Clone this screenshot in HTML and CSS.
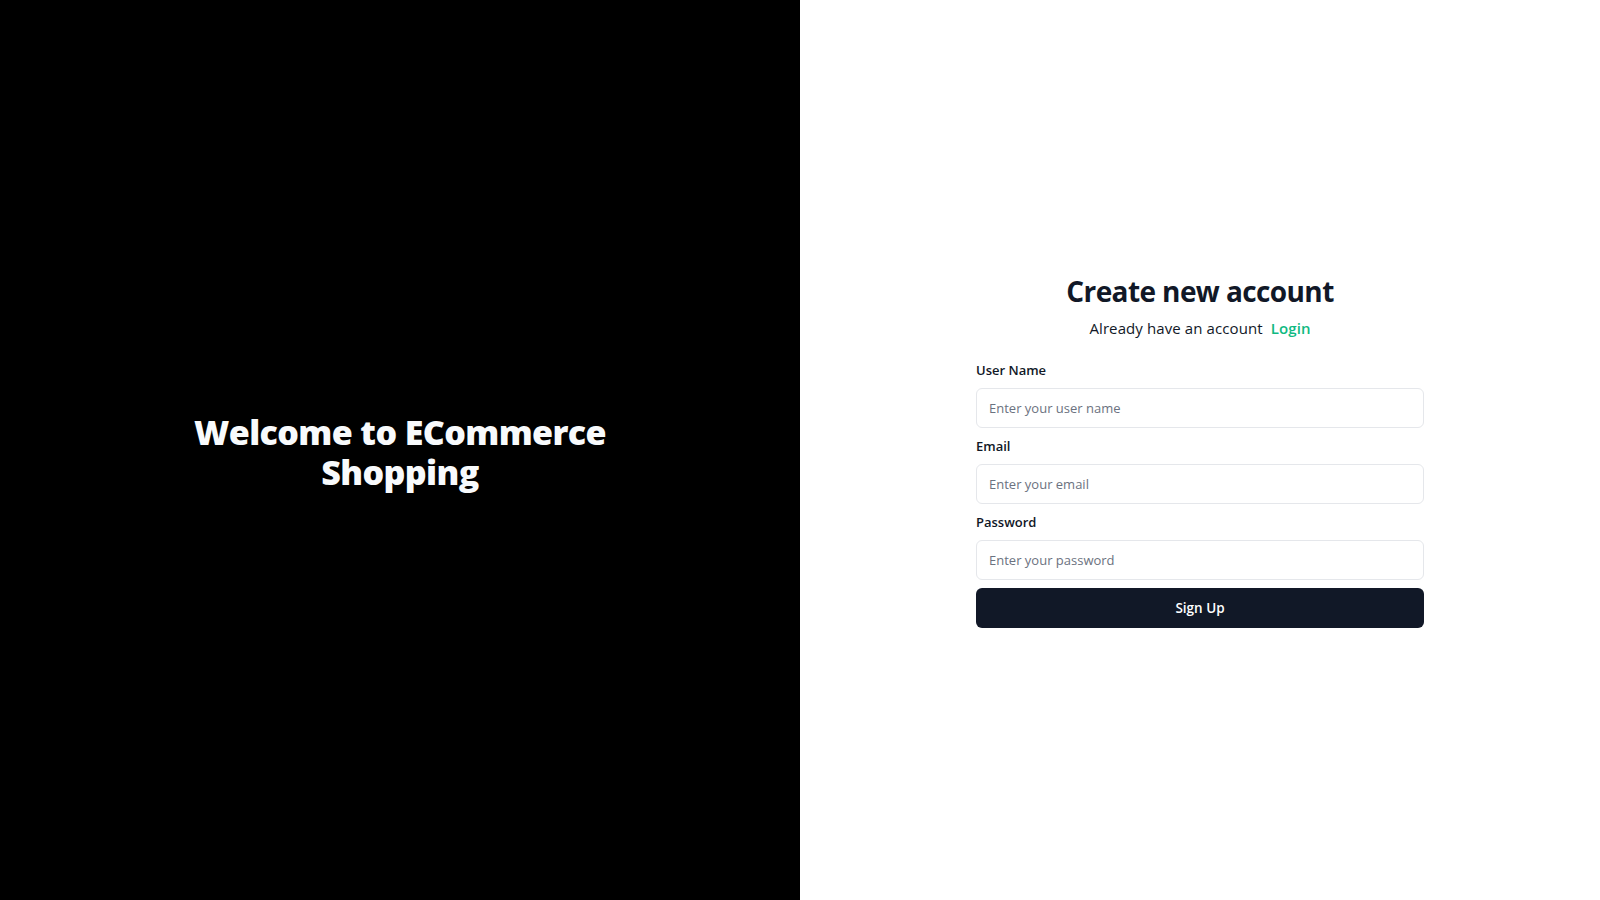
FILE: index.html
```html
<!DOCTYPE html>
<html lang="en">
<head>
<meta charset="utf-8">
<title>Create new account</title>
<link rel="stylesheet" href="styles.css">
</head>
<body>
<main class="page">
  <section class="hero">
    <h1 class="hero-title">Welcome to ECommerce Shopping</h1>
  </section>
  <section class="auth">
    <div class="auth-box">
      <h2 class="auth-title">Create new account</h2>
      <p class="auth-sub">Already have an account <a class="auth-link" href="#">Login</a></p>
      <form class="form">
        <label class="label" for="un">User Name</label>
        <input class="input" id="un" type="text" placeholder="Enter your user name">
        <label class="label" for="em">Email</label>
        <input class="input" id="em" type="email" placeholder="Enter your email">
        <label class="label" for="pw">Password</label>
        <input class="input" id="pw" type="password" placeholder="Enter your password">
        <button class="btn" type="button">Sign Up</button>
      </form>
    </div>
  </section>
</main>
</body>
</html>
```
FILE: styles.css
```css
* { box-sizing: border-box; }
html, body { margin: 0; padding: 0; }
body {
  font-family: "Open Sans", "Noto Sans", "Liberation Sans", sans-serif;
  color: #111827;
  background: #fff;
}
.page {
  display: grid;
  grid-template-columns: 1fr 1fr;
  height: 100vh;
}
.hero {
  background: #000;
  display: flex;
  align-items: center;
  justify-content: center;
}
.hero-title {
  margin: 0;
  padding-top: 4px;
  max-width: 460px;
  text-align: center;
  color: #f8fafc;
  font-size: 34px;
  line-height: 40px;
  font-weight: 800;
  letter-spacing: -0.6px;
}
.auth {
  display: flex;
  align-items: center;
  justify-content: center;
}
.auth-box {
  width: 448px;
  padding-top: 1px;
}
.auth-title {
  margin: 0;
  text-align: center;
  font-size: 28px;
  line-height: 36px;
  font-weight: 700;
  color: #111827;
  letter-spacing: -0.6px;
}
.auth-sub {
  margin: 7px 0 0;
  text-align: center;
  font-size: 15px;
  line-height: 24px;
  color: #111827;
  letter-spacing: 0.1px;
}
.auth-link {
  margin-left: 4px;
  color: #10b981;
  font-weight: 600;
  text-decoration: none;
}
.form {
  margin-top: 20px;
  display: flex;
  flex-direction: column;
  gap: 8px;
}
.label {
  font-size: 13px;
  line-height: 20px;
  font-weight: 600;
  color: #111827;
}
.input {
  height: 40px;
  width: 100%;
  padding: 0 12px;
  border: 1px solid #e5e7eb;
  border-radius: 6px;
  font-family: inherit;
  font-size: 13px;
  color: #111827;
  background: #fff;
  outline: none;
}
.input::placeholder { color: #6b7280; }
.btn {
  height: 40px;
  width: 100%;
  border: 0;
  border-radius: 6px;
  background: #111827;
  color: #fff;
  font-family: inherit;
  font-size: 13.5px;
  font-weight: 600;
  cursor: pointer;
}
```
